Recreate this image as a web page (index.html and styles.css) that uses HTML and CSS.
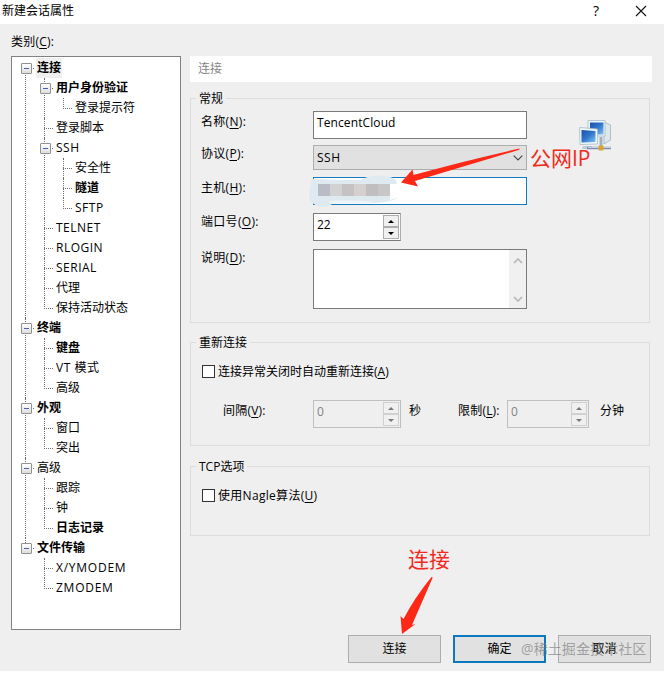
FILE: index.html
```html
<!DOCTYPE html>
<html lang="zh-CN">
<head>
<meta charset="utf-8">
<title>新建会话属性</title>
<link rel="stylesheet" href="styles.css">
</head>
<body>
<div class="dialog">
  <header class="titlebar">
    <span class="title">新建会话属性</span>
    <span class="help">?</span>
    <svg class="close" width="12" height="12" viewBox="0 0 12 12"><path d="M1 1L11 11M11 1L1 11" stroke="#111" stroke-width="1.1"/></svg>
  </header>
  <div class="category">类别(<u>C</u>):</div>
  <main class="content">
    <ul class="tree">
      <li><div class="node open bold selected"><span>连接</span></div>
        <ul>
          <li><div class="node open bold"><span>用户身份验证</span></div>
            <ul><li><div class="node"><span>登录提示符</span></div></li></ul>
          </li>
          <li><div class="node"><span>登录脚本</span></div></li>
          <li><div class="node open latin"><span>SSH</span></div>
            <ul>
              <li><div class="node"><span>安全性</span></div></li>
              <li><div class="node bold"><span>隧道</span></div></li>
              <li><div class="node latin"><span>SFTP</span></div></li>
            </ul>
          </li>
          <li><div class="node latin"><span>TELNET</span></div></li>
          <li><div class="node latin"><span>RLOGIN</span></div></li>
          <li><div class="node latin"><span>SERIAL</span></div></li>
          <li><div class="node"><span>代理</span></div></li>
          <li><div class="node"><span>保持活动状态</span></div></li>
        </ul>
      </li>
      <li><div class="node open bold"><span>终端</span></div>
        <ul>
          <li><div class="node bold"><span>键盘</span></div></li>
          <li><div class="node latin"><span>VT 模式</span></div></li>
          <li><div class="node"><span>高级</span></div></li>
        </ul>
      </li>
      <li><div class="node open bold"><span>外观</span></div>
        <ul>
          <li><div class="node"><span>窗口</span></div></li>
          <li><div class="node"><span>突出</span></div></li>
        </ul>
      </li>
      <li><div class="node open"><span>高级</span></div>
        <ul>
          <li><div class="node"><span>跟踪</span></div></li>
          <li><div class="node"><span>钟</span></div></li>
          <li><div class="node bold"><span>日志记录</span></div></li>
        </ul>
      </li>
      <li><div class="node open bold"><span>文件传输</span></div>
        <ul>
          <li><div class="node wide"><span>X/YMODEM</span></div></li>
          <li><div class="node wide"><span>ZMODEM</span></div></li>
        </ul>
      </li>
    </ul>

    <div class="panel">
      <h1 class="heading">连接</h1>

      <section class="group general">
        <h2 class="legend">常规</h2>
        <div class="row"><label class="low">名称(<u>N</u>):</label><div class="field name">TencentCloud</div></div>
        <div class="row"><label>协议(<u>P</u>):</label>
          <div class="field combo"><span class="latin">SSH</span><svg width="10" height="6" viewBox="0 0 10 6"><path d="M.7.7L5 5L9.3.7" fill="none" stroke="#444" stroke-width="1.1"/></svg></div></div>
        <div class="row"><label class="low">主机(<u>H</u>):</label><div class="field focus"></div></div>
        <div class="row"><label>端口号(<u>O</u>):</label>
          <div class="field spin">22<span class="arrows"><i class="up"></i><i class="down"></i></span></div></div>
        <div class="row"><label>说明(<u>D</u>):</label>
          <div class="field area"><span class="scroll">
            <svg width="10" height="6" viewBox="0 0 10 6"><path d="M1 5L5 1L9 5" fill="none" stroke="#b5b5b5" stroke-width="1.6"/></svg>
            <svg width="10" height="6" viewBox="0 0 10 6"><path d="M1 1L5 5L9 1" fill="none" stroke="#b5b5b5" stroke-width="1.6"/></svg>
          </span></div></div>
      </section>

      <section class="group reconnect">
        <h2 class="legend">重新连接</h2>
        <div class="check"><i class="box"></i><span>连接异常关闭时自动重新连接(<u>A</u>)</span></div>
        <div class="timing">
          <label>间隔(<u>V</u>):</label>
          <div class="field spin off">0<span class="arrows"><i class="up"></i><i class="down"></i></span></div>
          <span class="seconds">秒</span>
          <label class="limit">限制(<u>L</u>):</label>
          <div class="field spin off short">0<span class="arrows"><i class="up"></i><i class="down"></i></span></div>
          <span class="minutes">分钟</span>
        </div>
      </section>

      <section class="group tcp">
        <h2 class="legend">TCP选项</h2>
        <div class="check"><i class="box"></i><span class="nagle">使用Nagle算法(<u>U</u>)</span></div>
      </section>
    </div>
  </main>
  <footer class="buttons">
    <div class="button">连接</div>
    <div class="button primary">确定</div>
    <div class="button">取消</div>
  </footer>

  <svg class="overlay" width="664" height="674" viewBox="0 0 664 674">
    <defs>
      <linearGradient id="screen" x1="0" y1="0" x2="1" y2="1"><stop offset="0" stop-color="#1c50a9"/><stop offset=".5" stop-color="#3276cc"/><stop offset="1" stop-color="#83c2f3"/></linearGradient>
    </defs>
    <!-- network computers -->
    <path d="M604 122L610.500 125V140L604 144Z" fill="#dde7ec" stroke="#a1b4bf" stroke-width=".8"/>
    <path d="M588 120.500H605V136H588Z" fill="#eef7fa" stroke="#a4bbc9" stroke-width=".8"/>
    <path d="M590 122.500H603.500V134.500H590Z" fill="url(#screen)"/>
    <path d="M601 137V147" stroke="#9fb3be" stroke-width="3"/>
    <path d="M579.500 127.500L597.500 129V144L580 144.500Z" fill="#eff8fb" stroke="#a4bbc9" stroke-width=".8"/>
    <path d="M581.500 130L595.500 131V142L581.500 142.500Z" fill="url(#screen)"/>
    <path d="M583 146H592V149H582Z" fill="#bdcdd5"/>
    <path d="M587 148H611" stroke="#7e8eb2" stroke-width="2.500"/>
    <path d="M588 147.500H611" stroke="#d9e0ed" stroke-width=".8"/>
    <rect x="598.500" y="145.500" width="5" height="5" rx="1" fill="#daa52c"/>
    <!-- redacted host -->
    <path d="M311 184Q310 178 318 179Q337 180 360 180Q374 173 390 177Q397 178 397 185L400 196Q392 203 374 203Q350 200 333 203Q327 209 317 206Q307 201 309 193Z" fill="#dfeaf0"/>
    <path d="M330 201Q350 199 373 202V203.500H330Z" fill="#edf3f6"/>
    <path d="M318 184h12v12h-12z" fill="#b9bcc4"/><path d="M330 184h12v12h-12z" fill="#d2d1d3"/><path d="M342 184h12v12h-12z" fill="#c6c1c3"/><path d="M354 184h12v12h-12z" fill="#d4d0cf"/><path d="M366 184h12v12h-12z" fill="#c1bebf"/><path d="M378 184h12v12h-12z" fill="#c9c6c6"/>
    <path d="M390 184H405V195L390 200Z" fill="#fff"/>
    <!-- arrows -->
    <path d="M519.500 148.500Q520 149.500 518.500 150L415 181L418 186.500L401 182.500L412.500 169.500L413.500 175Q464 161 519.500 148.500Z" fill="#fe2817"/>
    <path d="M431.500 577Q433 577 432.500 578L412 625L415.500 624L402 634L400.500 616L403.500 619Q415 597 431.500 577Z" fill="#fe2817"/>
    <text class="note" x="530" y="166">公网IP</text>
    <text class="note" x="408" y="567">连接</text>
    <text class="watermark" x="521" y="654">@稀土掘金技术社区</text>
  </svg>
</div>
</body>
</html>
```
FILE: styles.css
```css
* { box-sizing: border-box; }
body { margin: 0; background: #fff; }
.dialog {
  position: relative; width: 664px; height: 671px; background: #efefef;
  font: 12px/18px "Open Sans", "Noto Sans CJK SC", sans-serif; color: #000;
}
ul { list-style: none; margin: 0; padding: 0; }
h1, h2 { margin: 0; font-size: 12px; font-weight: 400; }
u { text-decoration-thickness: 1px; text-underline-offset: 2px; text-decoration-skip-ink: none; }

.titlebar { display: flex; align-items: center; height: 24px; padding: 0 17px 0 2px; background: #fff; }
.title { flex: 1; padding-bottom: 2px; }
.help { font-size: 14px; margin-right: 36px; padding-bottom: 2px; }
.close { margin-bottom: 2px; }
.category { height: 32px; padding: 9px 0 0 11px; letter-spacing: .2px; }

.content { display: flex; gap: 9px; height: 574px; padding-left: 11px; }
.tree { width: 170px; border: 1px solid #828282; background: #fff; padding: 1px 0 0 13px; }
.tree ul { margin-left: 19px; }
.tree li { position: relative; }
.tree li::before { content: ""; position: absolute; left: 0; top: 0; bottom: 0; border-left: 1px dotted #707070; }
.tree li:last-child::before { bottom: auto; height: 11px; }
.tree > li:first-child::before { top: 10px; }
.node { position: relative; height: 20px; display: flex; align-items: center; white-space: nowrap; }
.node::before { content: ""; width: 9px; margin: 1px 2px 0 0; border-top: 1px dotted #707070; }
.node span { height: 20px; line-height: 20px; padding: 0 1px; }
.node.open::after {
  content: ""; position: absolute; left: -4px; top: 5px; width: 9px; height: 9px;
  border: 1px solid #919191; border-radius: 1px;
  background: linear-gradient(#4b5fb0, #4b5fb0) center / 5px 1px no-repeat, linear-gradient(#fff, #dedede);
}
.bold { font-weight: 700; }
.latin { letter-spacing: .5px; }
.wide { letter-spacing: .75px; }
.selected span { background: #efefef; }

.panel { width: 462px; }
.heading { height: 26px; padding: 4px 8px; background: #fff; color: #858585; }
.group { position: relative; width: 460px; border: 1px solid #dcdcdc; }
.legend { position: absolute; left: 5px; top: -9px; padding: 0 3px; background: #efefef; line-height: 18px; }
.reconnect .legend, .tcp .legend { top: -9px; }
.general { height: 225px; margin-top: 16px; padding: 12px 0 0 11px; display: flex; flex-direction: column; }
.row { display: flex; margin-bottom: 8px; }
.row:nth-of-type(1) { margin-bottom: 6px; }
.row:nth-of-type(2) { margin-bottom: 7px; }
.row label { width: 111px; margin-left: -1px; margin-right: 1px; letter-spacing: .3px; }
.row label.low { padding-top: 2px; }
.field { position: relative; width: 214px; height: 28px; border: 1px solid #7a7a7a; background: #fff; padding: 2px 3px; }
.name { letter-spacing: .1px; }
.combo { display: flex; align-items: center; justify-content: space-between; height: 25px; background: #e1e1e1; border-color: #adadad; }
.focus { border-color: #1479bd; }
.area { display: flex; justify-content: flex-end; height: 60px; padding: 0; }
.scroll { width: 17px; background: #f0f0f0; display: flex; flex-direction: column; justify-content: space-between; align-items: center; padding: 8px 0 6px; }
.spin { display: flex; justify-content: space-between; width: 88px; padding: 1px 1px 1px 3px; line-height: 20px; border-right-color: #adadad; }
.arrows { width: 16px; display: grid; grid-template-rows: 12px 12px; }
.arrows i { display: flex; align-items: center; justify-content: center; background: #f0f0f0; border: 1px solid #adadad; }
.arrows i::after { content: ""; border: 3px solid transparent; }
.arrows .up::after { border-top: 0; border-bottom-color: #000; }
.arrows .down::after { border-bottom: 0; border-top-color: #000; }
.off { background: #efefef; border-color: #bfbfbf; color: #828282; }
.off .arrows i { border-color: #d0d0d0; }
.off .arrows .up::after { border-bottom-color: #777; }
.off .arrows .down::after { border-top-color: #777; }
.short { width: 82px; }

.reconnect { height: 104px; margin-top: 19px; padding: 20px 0 0 11px; }
.check { display: flex; align-items: center; height: 18px; gap: 3px; }
.box { width: 13px; height: 13px; margin-bottom: 2px; border: 1px solid #333; background: #fff; }
.nagle { letter-spacing: .3px; }
.timing { display: flex; margin-top: 19px; padding-left: 21px; white-space: nowrap; }
.timing label { width: 90px; padding-top: 2px; letter-spacing: .2px; }
.seconds { width: 57px; padding: 2px 0 0 8px; }
.timing .limit { width: 49px; }
.minutes { padding: 2px 0 0 11px; }
.tcp { height: 70px; margin-top: 20px; padding: 20px 0 0 11px; }

.buttons { display: flex; justify-content: flex-end; gap: 12px; padding: 5px 13px 0 0; }
.button { width: 93px; height: 28px; border: 1px solid #adadad; background: #e1e1e1; text-align: center; line-height: 25px; }
.primary { border: 2px solid #0c78bf; line-height: 23px; }

.overlay { position: absolute; left: 0; top: 0; }
.note { fill: #f02b1d; font-family: "Open Sans", "Noto Sans CJK SC", sans-serif; font-size: 21px; }
.watermark { fill: #777; fill-opacity: .65; font-family: "Open Sans", "Noto Sans CJK SC", sans-serif; font-size: 14px; letter-spacing: .1px; }
```
